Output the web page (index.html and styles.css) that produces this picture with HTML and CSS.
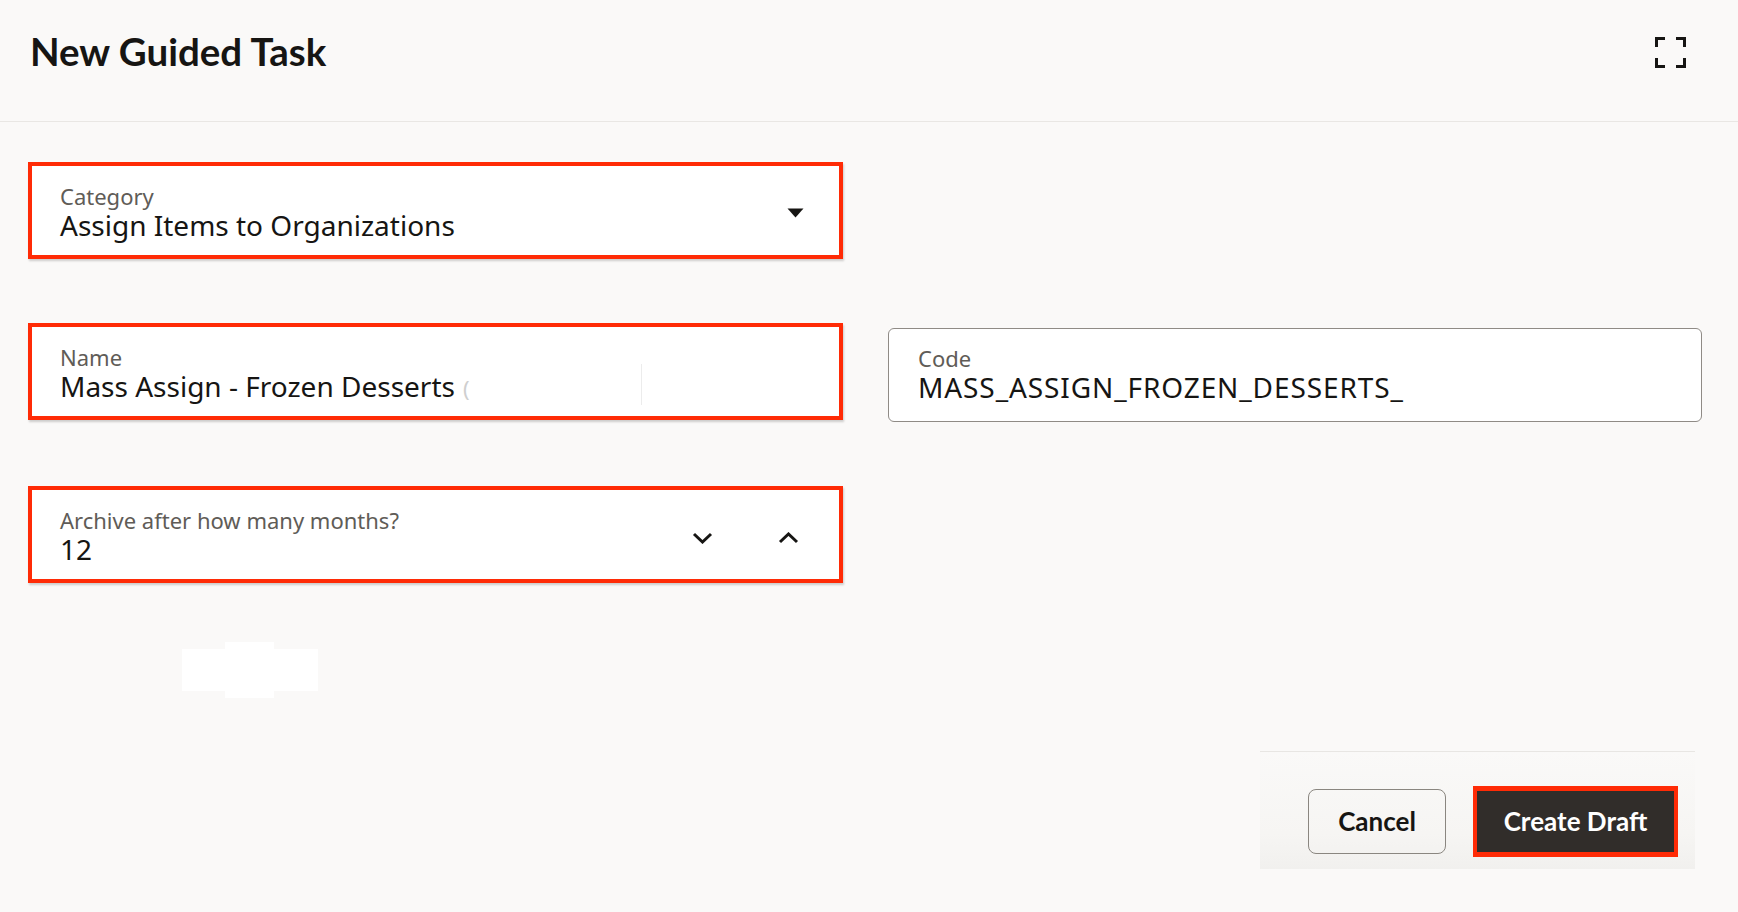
FILE: index.html
```html
<!DOCTYPE html>
<html lang="en">
<head>
<meta charset="utf-8">
<title>New Guided Task</title>
<link rel="stylesheet" href="styles.css">
</head>
<body>
<div class="page">
  <header class="header">
    <h1 class="title">New Guided Task</h1>
    <button class="icon-btn" aria-label="Full screen">
      <svg width="31" height="31" viewBox="0 0 31 31" fill="none" stroke="#161513" stroke-width="3">
        <path d="M1.5 10V1.5H10"/>
        <path d="M21 1.5H29.5V10"/>
        <path d="M29.5 21V29.5H21"/>
        <path d="M10 29.5H1.5V21"/>
      </svg>
    </button>
  </header>

  <main class="form">
    <div class="field hl cat">
      <div class="field-text">
        <div class="label">Category</div>
        <div class="value">Assign Items to Organizations</div>
      </div>
      <span class="caret">
        <svg width="17" height="10" viewBox="0 0 17 10"><path d="M0.5 0.5H16.5L8.5 9.5Z" fill="#161513"/></svg>
      </span>
    </div>

    <div class="field hl name">
      <div class="field-text name-text">
        <div class="label">Name</div>
        <div class="value">Mass Assign - Frozen Desserts<span class="ghost">(</span></div>
      </div>
      <span class="sep"></span>
    </div>
    <div class="field code">
      <div class="field-text">
        <div class="label">Code</div>
        <div class="value code-value">MASS_ASSIGN_FROZEN_DESSERTS_</div>
      </div>
    </div>

    <div class="field hl archive">
      <div class="field-text">
        <div class="label">Archive after how many months?</div>
        <div class="value">12</div>
      </div>
      <span class="chev down">
        <svg width="21" height="12" viewBox="0 0 21 12" fill="none" stroke="#161513" stroke-width="3"><path d="M2 2L10.5 10L19 2"/></svg>
      </span>
      <span class="chev up">
        <svg width="21" height="12" viewBox="0 0 21 12" fill="none" stroke="#161513" stroke-width="3"><path d="M2 10L10.5 2L19 10"/></svg>
      </span>
    </div>
  </main>

  <div class="redact">
    <div class="redact-wide"></div>
    <div class="redact-tall"></div>
  </div>

  <footer class="footer">
    <button class="btn btn-cancel">Cancel</button>
    <button class="btn btn-primary">Create Draft</button>
  </footer>
</div>
</body>
</html>
```

FILE: styles.css
```css
* { box-sizing: border-box; }

html, body {
  margin: 0;
  padding: 0;
  background: #faf9f8;
}

body {
  font-family: "Noto Sans", "Liberation Sans", sans-serif;
  color: #161513;
}

.page {
  width: 1738px;
  height: 912px;
  display: flex;
  flex-direction: column;
  overflow: hidden;
}

/* Header */
.header {
  height: 122px;
  flex: none;
  display: flex;
  justify-content: space-between;
  align-items: flex-start;
  padding: 27px 52px 0 30px;
  border-bottom: 1px solid #e9e7e4;
}

.title {
  margin: 0;
  font-family: Lato, "Liberation Sans", sans-serif;
  font-weight: 700;
  font-size: 38.5px;
  line-height: 48px;
  color: #161513;
}

.icon-btn {
  margin-top: 10px;
  padding: 0;
  border: 0;
  background: transparent;
  width: 31px;
  height: 31px;
  display: block;
}
.icon-btn svg { display: block; }

/* Form */
.form {
  display: grid;
  grid-template-columns: 815px 814px;
  column-gap: 45px;
  row-gap: 64px;
  padding: 40px 0 0 28px;
  align-items: start;
}

.field {
  display: flex;
  align-items: flex-start;
  background: #ffffff;
  border: 1px solid #8f8b86;
  border-radius: 6px;
  height: 94px;
  padding: 16px 28px 0 29px;
}

.field.hl {
  border: 4px solid #ff2b06;
  border-radius: 0;
  height: 97px;
  padding: 17px 28px 0 28px;
  box-shadow: 1px 2px 2px rgba(0, 0, 0, 0.18);
}

.cat { grid-column: 1; grid-row: 1; }
.name { grid-column: 1; grid-row: 2; height: 99px; }
.code { grid-column: 2; grid-row: 2; margin-top: 5px; }
.archive {
  grid-column: 1;
  grid-row: 3;
  box-shadow: inset 0 2px 0 #ffffff, inset 0 3px 0 #a19d98, 1px 2px 2px rgba(0, 0, 0, 0.18);
}

.field-text {
  flex: 1;
  min-width: 0;
}

.label {
  font-size: 22px;
  line-height: 26px;
  color: #605c57;
  white-space: nowrap;
}

.value {
  font-size: 28px;
  line-height: 32px;
  color: #161513;
  white-space: nowrap;
}

.code-value { letter-spacing: 0.9px; }

.ghost {
  color: #cfcfcf;
  font-size: 22px;
  margin-left: 8px;
}

.name-text {
  flex: none;
  width: 581px;
}

.sep {
  flex: none;
  align-self: flex-end;
  width: 1px;
  height: 41px;
  margin-bottom: 11px;
  background: #ececec;
}

.caret {
  align-self: center;
  margin-bottom: 12px;
  margin-right: 7px;
  display: block;
  line-height: 0;
}

.chev {
  align-self: center;
  margin-bottom: 10px;
  display: block;
  line-height: 0;
}
.chev.down { margin-right: 65px; }
.chev.up { margin-right: 12px; }

/* Redaction patch */
.redact {
  display: grid;
  width: 136px;
  height: 56px;
  margin: 59px 0 0 182px;
  flex: none;
}
.redact-wide,
.redact-tall {
  grid-area: 1 / 1;
  background: #ffffff;
}
.redact-wide {
  align-self: center;
  height: 42px;
}
.redact-tall {
  justify-self: start;
  margin-left: 43px;
  width: 49px;
}

/* Footer */
.footer {
  flex: none;
  align-self: flex-end;
  width: 435px;
  height: 118px;
  margin: 53px 43px 0 0;
  padding: 21px 17px 0 0;
  border-top: 1px solid #e8e6e3;
  background: linear-gradient(180deg, #faf9f8 0%, #f6f5f3 70%, #f1f0ee 100%);
  display: flex;
  justify-content: flex-end;
  align-items: center;
  gap: 27px;
}

.btn {
  font-family: Lato, "Liberation Sans", sans-serif;
  font-weight: 700;
  font-size: 26px;
  line-height: 1;
  cursor: pointer;
}

.btn-cancel {
  width: 138px;
  height: 65px;
  border: 1px solid #8a8680;
  border-radius: 8px;
  background: transparent;
  color: #161513;
}

.btn-primary {
  width: 205px;
  height: 71px;
  border: 4px solid #ff2b06;
  border-top-width: 5px;
  border-bottom-width: 5px;
  border-radius: 0;
  background: #312d2a;
  color: #ffffff;
}
```
